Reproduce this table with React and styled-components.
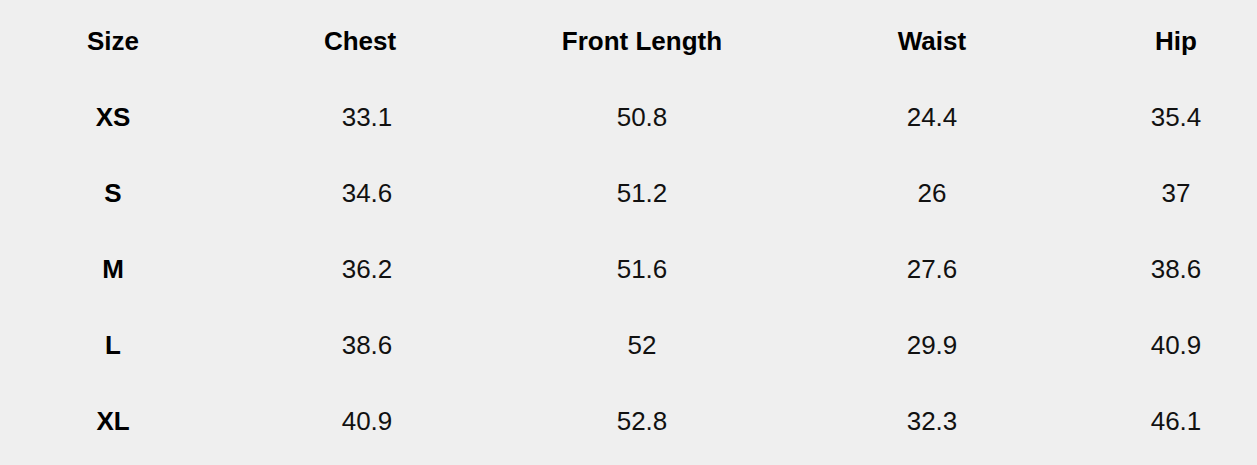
import React from 'react';
import styled, { createGlobalStyle } from 'styled-components';

const GlobalStyle = createGlobalStyle`
  html, body {
    margin: 0;
    padding: 0;
    background: #efefef;
  }
  body {
    font-family: "Liberation Sans", Arial, sans-serif;
    color: #000;
  }
`;

const Page = styled.div`
  width: 1257px;
  height: 465px;
  padding: 3px 0 0 24px;
  box-sizing: border-box;
  background: #efefef;
  overflow: hidden;
`;

const Grid = styled.div`
  display: grid;
  grid-template-columns: 178px 316px 248px 332px 156px;
  grid-auto-rows: 76px;
`;

const Cell = styled.div`
  text-align: center;
  font-size: 26px;
  line-height: 76px;
  font-weight: ${p => (p.$bold ? 700 : 400)};
  padding-left: ${p => p.$shift || 0}px;
  color: ${p => (p.$bold ? '#000' : '#111')};
  white-space: nowrap;
`;

const headers = ['Size', 'Chest', 'Front Length', 'Waist', 'Hip'];

const rows = [
  ['XS', '33.1', '50.8', '24.4', '35.4'],
  ['S', '34.6', '51.2', '26', '37'],
  ['M', '36.2', '51.6', '27.6', '38.6'],
  ['L', '38.6', '52', '29.9', '40.9'],
  ['XL', '40.9', '52.8', '32.3', '46.1'],
];

const App = () => (
  <>
    <GlobalStyle />
    <Page>
      <Grid>
        {headers.map(h => (
          <Cell key={h} $bold>{h}</Cell>
        ))}
        {rows.map(row =>
          row.map((v, i) => (
            <Cell key={row[0] + i} $bold={i === 0} $shift={i === 1 ? 14 : 0}>
              {v}
            </Cell>
          ))
        )}
      </Grid>
    </Page>
  </>
);

export default App;
